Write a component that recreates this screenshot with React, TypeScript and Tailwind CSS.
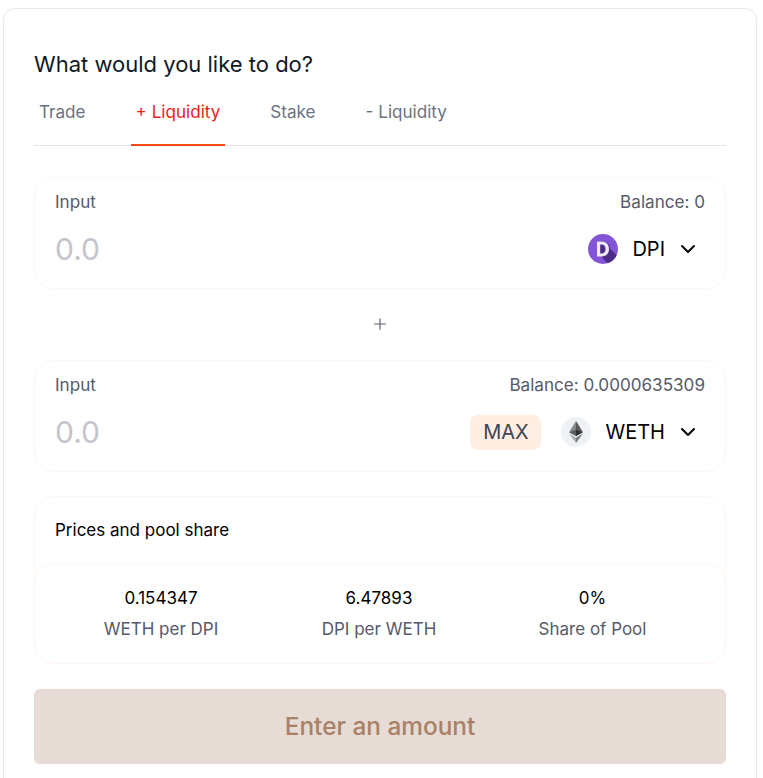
import { ChevronDown, Plus } from 'lucide-react'

const tabs = ['Trade', '+ Liquidity', 'Stake', '- Liquidity']

function DpiLogo() {
  return (
    <svg width="30" height="30" viewBox="0 0 30 30" className="shrink-0">
      <defs>
        <clipPath id="dpi-clip">
          <circle cx="15" cy="15" r="15" />
        </clipPath>
      </defs>
      <circle cx="15" cy="15" r="15" fill="#8455d6" />
      <g clipPath="url(#dpi-clip)">
        <path d="M9 7.500h5c5 0 8 3 8 7l9 9-9 9-13-15z" fill="#4d2c88" />
      </g>
      <path
        d="M9 7.500h4.500c4.600 0 7.500 3 7.500 7.500s-2.900 7.500-7.500 7.500H9zm3.200 3v9h1.300c2.500 0 4.100-1.800 4.100-4.500s-1.600-4.500-4.100-4.500z"
        fill="#efe8fa"
        fillRule="evenodd"
      />
    </svg>
  )
}

function EthLogo() {
  return (
    <div className="flex h-[30px] w-[30px] shrink-0 items-center justify-center rounded-full bg-[#eef1f5]">
      <svg width="14" height="22" viewBox="0 0 14 22">
        <path d="M7 0L0 11.200 7 8z" fill="#8a8a8a" />
        <path d="M7 0l7 11.200L7 8z" fill="#5a5a5a" />
        <path d="M0 11.200L7 15.300V8z" fill="#5c5c5c" />
        <path d="M14 11.200L7 15.300V8z" fill="#2f2f2f" />
        <path d="M0 12.600L7 22v-5.300z" fill="#a8a8a8" />
        <path d="M14 12.600L7 22v-5.300z" fill="#7c7c7c" />
      </svg>
    </div>
  )
}

function InputPanel({
  balance,
  symbol,
  logo,
  showMax,
}: {
  balance: string
  symbol: string
  logo: React.ReactNode
  showMax?: boolean
}) {
  return (
    <div className="h-[112px] rounded-[20px] border border-[#fff6f0] px-5 pt-[12px]">
      <div className="flex items-center justify-between text-[17.1px] leading-6 text-[#565a69]">
        <span>Input</span>
        <span>Balance: {balance}</span>
      </div>
      <div className="mt-[17px] flex h-[36px] items-center justify-between">
        <span className="text-[30px] text-[#c3c5cb]">0.0</span>
        <div className="flex items-center">
          {showMax && (
            <span className="mr-5 flex h-[35px] w-[71px] items-center justify-center rounded-lg bg-[#ffeee1] text-[20px] text-[#40444f]">
              MAX
            </span>
          )}
          {logo}
          <span className="ml-[14px] text-[20px] text-black">{symbol}</span>
          <ChevronDown className="mr-[5px] ml-[11px] h-6 w-6 text-black" strokeWidth={2} />
        </div>
      </div>
    </div>
  )
}

function Stat({ value, label }: { value: string; label: string }) {
  return (
    <div className="flex flex-col items-center">
      <span className="text-[17px] leading-6 text-black">{value}</span>
      <span className="mt-[7px] text-[17px] leading-6 text-[#565a69]">{label}</span>
    </div>
  )
}

export default function App() {
  return (
    <div className="h-[778px] overflow-hidden bg-white pt-2 pl-[3px] font-['Inter',sans-serif]">
      <div className="h-[790px] w-[754px] rounded-xl border border-[#e5e7eb] px-[30px] pt-[39px]">
        <h2 className="text-[22px] leading-[33px] text-[#111827]">What would you like to do?</h2>
        <div className="mt-[2px] flex border-b border-[#e5e7eb]">
          <div className="flex gap-10">
            {tabs.map((tab) => (
              <div
                key={tab}
                className={`-mb-px h-[63px] border-b-2 px-[5px] pt-[17px] text-[17.1px] leading-6 ${
                  tab === '+ Liquidity' ? 'border-[#f84b12] text-[#ee1c1c]' : 'border-transparent text-[#6b7280]'
                }`}
              >
                {tab}
              </div>
            ))}
          </div>
        </div>

        <div className="mt-[31px]">
          <InputPanel balance="0" symbol="DPI" logo={<DpiLogo />} />
        </div>
        <div className="flex h-[71px] items-center justify-center pb-[2px]">
          <Plus className="h-[18px] w-[18px] text-[#565a69]" strokeWidth={1.5} />
        </div>
        <InputPanel balance="0.0000635309" symbol="WETH" logo={<EthLogo />} showMax />

        <div className="mt-[24px] rounded-[20px] border border-[#fff6f0]">
          <div className="flex h-[66px] items-center px-5 pt-[2px] text-[17px] text-black">Prices and pool share</div>
          <div className="-mx-px -mb-px grid h-[101px] grid-cols-[252px_184px_1fr] items-center rounded-[20px] border border-[#fff6f0] pr-[11px]">
            <Stat value="0.154347" label="WETH per DPI" />
            <Stat value="6.47893" label="DPI per WETH" />
            <Stat value="0%" label="Share of Pool" />
          </div>
        </div>

        <button className="mt-[25px] h-[75px] w-full rounded-md bg-[#e6dbd5] text-[24.4px] font-medium text-[#a98166]">
          Enter an amount
        </button>
      </div>
    </div>
  )
}
